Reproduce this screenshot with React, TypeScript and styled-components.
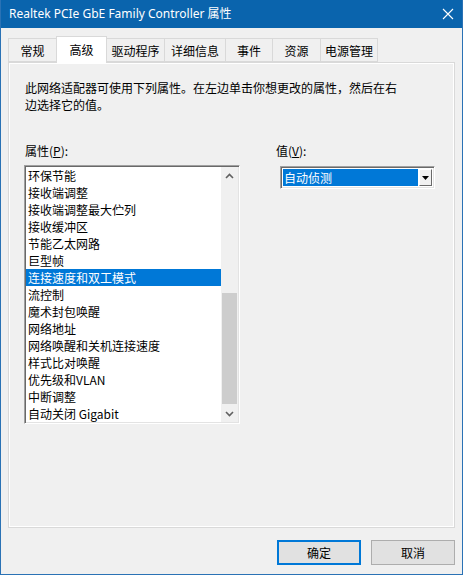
import React from "react";
import styled, { createGlobalStyle } from "styled-components";

const Global = createGlobalStyle`
  html, body { margin: 0; padding: 0; background: #f0f0f0; }
  * { box-sizing: border-box; }
`;

const FONT = `"Noto Sans CJK SC", "Noto Sans", sans-serif`;

const Window = styled.div`
  width: 463px;
  height: 575px;
  display: flex;
  flex-direction: column;
  background: #f0f0f0;
  border: 1px solid #2a72b5;
  border-top: none;
  font-family: ${FONT};
  font-size: 12px;
  color: #000;
`;

const TitleBar = styled.div`
  height: 28px;
  flex: none;
  background: #0a64ad;
  color: #fff;
  display: flex;
  align-items: center;
  justify-content: space-between;
  padding: 0 8px 0 8px;
  font-family: "Noto Sans", "Noto Sans CJK SC", sans-serif;
  font-size: 12px;
`;

const TitleText = styled.span`
  line-height: 16px;
  padding-bottom: 1px;
`;

const Body = styled.div`
  flex: 1;
  display: flex;
  flex-direction: column;
  padding: 8px 7px 10px 7px;
`;

const TabRow = styled.div`
  height: 26px;
  display: flex;
  align-items: flex-end;
  padding-left: 0;
`;

const Tab = styled.div<{ $w: number; $active?: boolean }>`
  width: ${(p) => p.$w}px;
  height: ${(p) => (p.$active ? 27 : 24)}px;
  margin-bottom: ${(p) => (p.$active ? -1 : 0)}px;
  position: relative;
  z-index: ${(p) => (p.$active ? 2 : 1)};
  background: ${(p) => (p.$active ? "#ffffff" : "#f0f0f0")};
  border: 1px solid #d9d9d9;
  border-bottom: ${(p) => (p.$active ? "none" : "1px solid #d9d9d9")};
  margin-left: -1px;
  display: flex;
  justify-content: center;
  align-items: ${(p) => (p.$active ? "flex-start" : "center")};
  padding-top: ${(p) => (p.$active ? 4 : 0)}px;
  line-height: 17px;
  white-space: nowrap;
  &:first-child { margin-left: 0; }
`;

const Panel = styled.div`
  height: 466px;
  border: 1px solid #d9d9d9;
  box-shadow: inset 1px 1px 0 #ffffff, inset -1px -1px 0 #ffffff;
  background: #f0f0f0;
  padding: 16px 15px;
  display: flex;
  flex-direction: column;
`;

const Description = styled.p`
  margin: 0 0 0 1px;
  width: 375px;
  line-height: 17px;
`;

const FieldRow = styled.div`
  display: flex;
  margin-top: 29px;
`;

const LeftCol = styled.div`
  width: 216px;
  display: flex;
  flex-direction: column;
`;

const RightCol = styled.div`
  margin-left: 36px;
  display: flex;
  flex-direction: column;
`;

const Label = styled.div<{ $indent?: number }>`
  line-height: 17px;
  padding-left: ${(p) => p.$indent ?? 0}px;
`;

const U = styled.span`
  text-decoration: underline;
  text-underline-offset: 1px;
`;

const ListBox = styled.div`
  margin-top: 6px;
  width: 216px;
  height: 259px;
  border-style: solid;
  border-width: 1px;
  border-color: #a0a0a0 #ffffff #ffffff #a0a0a0;
  box-shadow: inset 1px 1px 0 #696969, inset -1px -1px 0 #e3e3e3;
  background: #fff;
  padding: 1px;
  display: flex;
`;

const Items = styled.div`
  flex: 1;
  display: flex;
  flex-direction: column;
`;

const Item = styled.div<{ $selected?: boolean }>`
  height: 17px;
  line-height: 17px;
  padding-left: 2px;
  white-space: nowrap;
  background: ${(p) => (p.$selected ? "#0078d7" : "transparent")};
  color: ${(p) => (p.$selected ? "#fff" : "#000")};
`;

const ScrollBar = styled.div`
  width: 17px;
  display: flex;
  flex-direction: column;
  background: #f0f0f0;
`;

const ArrowBtn = styled.div`
  height: 17px;
  flex: none;
  display: flex;
  align-items: center;
  justify-content: center;
`;

const Track = styled.div`
  flex: 1;
  display: flex;
  flex-direction: column;
`;

const Thumb = styled.div`
  margin: 0 0 0 1px;
  width: 15px;
  background: #cdcdcd;
`;

const Combo = styled.div`
  margin-top: 7px;
  margin-left: 4px;
  width: 155px;
  height: 23px;
  border-style: solid;
  border-width: 1px;
  border-color: #a0a0a0 #ffffff #ffffff #a0a0a0;
  box-shadow: inset 1px 1px 0 #696969, inset -1px -1px 0 #e3e3e3;
  background: #fff;
  padding: 2px 2px 2px 2px;
  display: flex;
`;

const ComboValue = styled.div`
  flex: 1;
  background: #0078d7;
  color: #fff;
  line-height: 17px;
  padding-left: 1px;
  margin-right: 1px;
`;

const ComboButton = styled.div`
  width: 13px;
  background: #f0f0f0;
  border-style: solid;
  border-width: 1px;
  border-color: #ffffff #696969 #696969 #ffffff;
  display: flex;
  align-items: center;
  justify-content: center;
`;

const ButtonRow = styled.div`
  margin-top: 12px;
  display: flex;
  justify-content: flex-end;
  gap: 10px;
`;

const Button = styled.button<{ $default?: boolean }>`
  width: 84px;
  height: 25px;
  margin: 0;
  padding: 0;
  font-family: ${FONT};
  font-size: 12px;
  color: #000;
  background: #e1e1e1;
  border: 1px solid ${(p) => (p.$default ? "#0078d7" : "#adadad")};
  box-shadow: ${(p) => (p.$default ? "inset 0 0 0 1px #0078d7" : "none")};
  line-height: 17px;
`;

const tabs = [
  { label: "常规", w: 49 },
  { label: "高级", w: 51, active: true },
  { label: "驱动程序", w: 59 },
  { label: "详细信息", w: 62 },
  { label: "事件", w: 48 },
  { label: "资源", w: 49 },
  { label: "电源管理", w: 58 },
];

const items = [
  "环保节能",
  "接收端调整",
  "接收端调整最大伫列",
  "接收缓冲区",
  "节能乙太网路",
  "巨型帧",
  "连接速度和双工模式",
  "流控制",
  "魔术封包唤醒",
  "网络地址",
  "网络唤醒和关机连接速度",
  "样式比对唤醒",
  "优先级和VLAN",
  "中断调整",
  "自动关闭 Gigabit",
];

const Chevron = ({ up }: { up?: boolean }) => (
  <svg width="9" height="6" viewBox="0 0 9 6">
    <path
      d={up ? "M1 5 L4.5 1.5 L8 5" : "M1 1 L4.5 4.5 L8 1"}
      fill="none"
      stroke="#606060"
      strokeWidth="1.6"
    />
  </svg>
);

export default function App() {
  return (
    <>
      <Global />
      <Window>
        <TitleBar>
          <TitleText>Realtek PCIe GbE Family Controller 属性</TitleText>
          <svg width="12" height="12" viewBox="0 0 12 12">
            <path d="M1 1 L11 11 M11 1 L1 11" stroke="#fff" strokeWidth="1.1" />
          </svg>
        </TitleBar>
        <Body>
          <TabRow>
            {tabs.map((t) => (
              <Tab key={t.label} $w={t.w} $active={t.active}>
                {t.label}
              </Tab>
            ))}
          </TabRow>
          <Panel>
            <Description>
              此网络适配器可使用下列属性。在左边单击你想更改的属性，然后在右边选择它的值。
            </Description>
            <FieldRow>
              <LeftCol>
                <Label $indent={1}>
                  属性(<U>P</U>):
                </Label>
                <ListBox>
                  <Items>
                    {items.map((it, i) => (
                      <Item key={it} $selected={i === 6}>
                        {it}
                      </Item>
                    ))}
                  </Items>
                  <ScrollBar>
                    <ArrowBtn>
                      <Chevron up />
                    </ArrowBtn>
                    <Track>
                      <Thumb style={{ marginTop: 109, height: 111 }} />
                    </Track>
                    <ArrowBtn>
                      <Chevron />
                    </ArrowBtn>
                  </ScrollBar>
                </ListBox>
              </LeftCol>
              <RightCol>
                <Label>
                  值(<U>V</U>):
                </Label>
                <Combo>
                  <ComboValue>自动侦测</ComboValue>
                  <ComboButton>
                    <svg width="7" height="4" viewBox="0 0 7 4">
                      <path d="M0 0 L7 0 L3.5 4 Z" fill="#000" />
                    </svg>
                  </ComboButton>
                </Combo>
              </RightCol>
            </FieldRow>
          </Panel>
          <ButtonRow>
            <Button $default>确定</Button>
            <Button>取消</Button>
          </ButtonRow>
        </Body>
      </Window>
    </>
  );
}
